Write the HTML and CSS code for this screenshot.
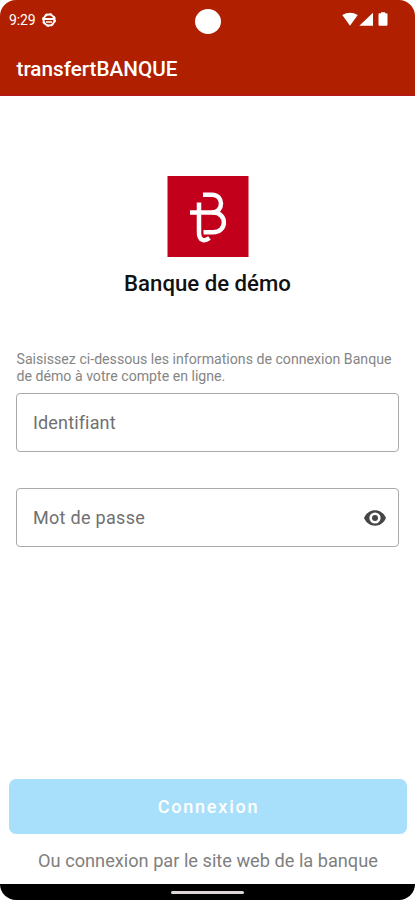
FILE: index.html
```html
<!DOCTYPE html>
<html lang="fr">
<head>
    <meta charset="UTF-8">
    <meta name="viewport" content="width=device-width, initial-scale=1.0">
    <title>transfertBANQUE</title>
    <link rel="stylesheet" href="styles.css">
</head>
<body>
    <div class="screen">
        <header>
            <div class="status-bar">
                <span class="clock">9:29</span>
                <svg class="notif-icon" width="14" height="14" viewBox="0 0 14 14" fill="none" stroke="#fff">
                    <circle cx="7" cy="7" r="5.5" stroke-width="2"/>
                    <circle cx="7" cy="7" r="6.5" stroke-width="1" stroke-dasharray="2.5 2.6"/>
                    <path d="M2 6h10" stroke-width="1.8"/>
                    <path d="M4 9h6" stroke-width="1.4"/>
                </svg>
                <span class="camera"></span>
                <svg class="system-icons" width="48" height="16" viewBox="0 0 48 16" fill="#fff">
                    <path d="M.3 3.1Q8 -1.7 15.7 3.1L8 13.8z"/>
                    <path d="M31 .8v13H17.3z"/>
                    <path d="M36.5 2.2q0-1 1-1h1.5V.3h4v.9h1.5q1 0 1 1v10.6q0 1-1 1h-7q-1 0-1-1z"/>
                </svg>
            </div>
            <div class="app-title">transfertBANQUE</div>
        </header>

        <main>
            <section class="bank">
                <svg class="bank-logo" width="82" height="81" viewBox="0 0 82 81">
                    <rect x=".5" width="81" height="81" fill="#c2001b"/>
                    <g fill="none" stroke="#fff" stroke-width="4.5">
                        <path d="M36 18.7H45C57 18.7 57 36.5 45 36.5"/>
                        <path d="M23 36.5H46C60.5 36.5 60.5 56.3 46 56.3H36.5"/>
                        <path d="M32 26.5V56.5C32 64.5 37 66 42.5 62"/>
                    </g>
                </svg>
                <h1>Banque de démo</h1>
            </section>

            <form class="login-form">
                <p class="hint">Saisissez ci-dessous les informations de connexion Banque<br>de démo à votre compte en ligne.</p>
                <div class="field">
                    <span class="label-id">Identifiant</span>
                </div>
                <div class="field">
                    <span class="label-pass">Mot de passe</span>
                    <svg class="eye" width="22" height="16" viewBox="0 0 22 16">
                        <path d="M0 8C4.5-2.3 17.5-2.3 22 8C17.5 18.3 4.5 18.3 0 8z" fill="#454545"/>
                        <circle cx="11" cy="8" r="5.6" fill="#fff"/>
                        <circle cx="11" cy="8" r="3" fill="#454545"/>
                    </svg>
                </div>
            </form>

            <div class="actions">
                <div class="btn-login"><span>Connexion</span></div>
                <a class="web-link">Ou connexion par le site web de la banque</a>
            </div>
        </main>

        <footer>
            <div class="home-bar"></div>
        </footer>
    </div>
</body>
</html>
```
FILE: styles.css
```css
/* Styles généraux */
body, html {
    margin: 0;
    padding: 0;
    background-color: #fff;
    font-family: Roboto, sans-serif;
}

.screen {
    display: flex;
    flex-direction: column;
    width: 415px;
    height: 900px;
    overflow: hidden;
    border-radius: 16px;
    background-color: #fff;
    white-space: nowrap;
}

/* En-tête */
header {
    box-sizing: border-box;
    height: 96px;
    background-color: #b02000;
    border-bottom: 1px solid #b51520;
    color: #fff;
}

.status-bar {
    position: relative;
    display: flex;
    align-items: center;
    height: 40px;
    padding: 0 25px 0 9px;
}

.clock {
    width: 27px;
    font-size: 14px;
    letter-spacing: -0.1px;
}

.notif-icon {
    margin-left: 6px;
}

.camera {
    position: absolute;
    left: 195px;
    top: 9px;
    width: 26px;
    height: 25px;
    border-radius: 50%;
    background-color: #fff;
}

.system-icons {
    margin-left: auto;
}

.app-title {
    padding-left: 16.5px;
    font-size: 20.7px;
    font-weight: 500;
    line-height: 58px;
}

/* Contenu */
main {
    display: flex;
    flex-direction: column;
    flex: 1;
}

.bank {
    display: flex;
    flex-direction: column;
    align-items: center;
    padding-top: 80px;
}

.bank-logo {
    display: block;
}

h1 {
    margin: 11px 0 0;
    font-size: 22.2px;
    font-weight: 500;
    line-height: 30px;
    color: #111;
}

.login-form {
    padding: 53px 16px 0;
}

.hint {
    margin: 0 0 8px;
    padding-left: 0.5px;
    font-size: 14.15px;
    line-height: 17px;
    color: #858585;
}

.field {
    box-sizing: border-box;
    display: flex;
    align-items: center;
    justify-content: space-between;
    height: 59px;
    margin-bottom: 36px;
    padding: 0 12px 0 16px;
    border: 1px solid #aaa;
    border-radius: 4px;
    font-size: 18px;
    color: #707070;
}

.label-id {
    letter-spacing: 0.15px;
}

.label-pass {
    letter-spacing: 0.3px;
}

/* Actions */
.actions {
    display: flex;
    flex-direction: column;
    align-items: center;
    margin-top: auto;
    padding: 0 8px 11px 9px;
}

.btn-login {
    align-self: stretch;
    border-radius: 7px;
    background-color: #a8e0fb;
    color: #fff;
    font-size: 18px;
    font-weight: 500;
    letter-spacing: 1.8px;
    line-height: 55px;
    text-align: center;
    text-indent: 1px;
}

.web-link {
    margin-top: 14px;
    font-size: 18.2px;
    line-height: 25px;
    color: #808080;
}

/* Barre de navigation */
footer {
    height: 16px;
    background-color: #000;
}

.home-bar {
    width: 73px;
    height: 3px;
    margin: 7px auto 0;
    border-radius: 2px;
    background-color: #ddd5d8;
}
```
